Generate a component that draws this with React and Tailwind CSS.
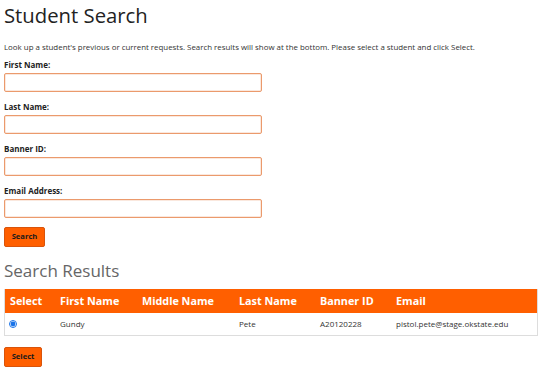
import React from "react";

const fields = ["First Name:", "Last Name:", "Banner ID:", "Email Address:"];

export default function App() {
  return (
    <div className="w-[542px] h-[371px] bg-white px-[4px] text-[#333] overflow-hidden" style={{ fontFamily: '"Open Sans", sans-serif' }}>
      <h1 className="text-[20.3px] leading-[24px] mt-[3px] text-[#222] font-normal">Student Search</h1>
      <p className="text-[7.9px] leading-[12px] mt-[14px] text-[#333]">
        Look up a student's previous or current requests. Search results will show at the bottom. Please select a student and click Select.
      </p>
      <div className="flex flex-col">
        {fields.map((f, i) => (
          <div key={f} className={i === 0 ? "mt-[6px]" : "mt-[9px]"}>
            <label className="block text-[8px] leading-[12px] font-bold text-[#222]">{f}</label>
            <input className="block mt-[2px] w-[258px] h-[19px] border border-[#eb9a6c] rounded-[2px] bg-white outline-none shadow-[inset_0_0_0_0.5px_#f6d2bd]" />
          </div>
        ))}
      </div>
      <button className="mt-[9px] w-[41px] h-[20px] bg-[#ff5f00] border border-[#d9540b] rounded-[2px] text-[7.6px] font-bold text-[#1a1a1a] leading-none">
        Search
      </button>
      <h2 className="text-[17px] leading-[20px] mt-[14px] text-[#666] font-normal">Search Results</h2>
      <div className="mt-[8px] w-[534px] border border-[#ddd] border-t-0">
        <div className="flex items-center h-[24px] bg-[#ff5f00] text-white font-bold text-[10.8px]">
          <div className="w-[55px] pl-[5px]">Select</div>
          <div className="w-[82px]">First Name</div>
          <div className="w-[97px]">Middle Name</div>
          <div className="w-[81px]">Last Name</div>
          <div className="w-[76px]">Banner ID</div>
          <div>Email</div>
        </div>
        <div className="flex items-center h-[22px] text-[8px] text-[#333]">
          <div className="w-[55px] pl-[4px] flex items-center">
            <input type="radio" defaultChecked className="w-[8px] h-[8px] m-0 accent-[#1a73e8]" />
          </div>
          <div className="w-[82px]">Gundy</div>
          <div className="w-[97px]"></div>
          <div className="w-[81px]">Pete</div>
          <div className="w-[76px]">A20120228</div>
          <div>pistol.pete@stage.okstate.edu</div>
        </div>
      </div>
      <button className="mt-[11px] w-[38px] h-[20px] bg-[#ff5f00] border border-[#d9540b] rounded-[2px] text-[7.6px] font-bold text-[#1a1a1a] leading-none">
        Select
      </button>
    </div>
  );
}
